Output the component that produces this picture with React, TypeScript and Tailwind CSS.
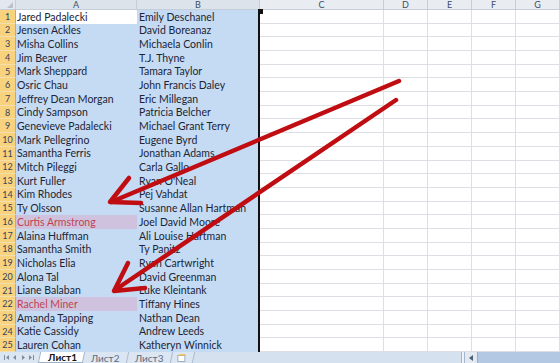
import React from 'react';

const colA = [
  'Jared Padalecki', 'Jensen Ackles', 'Misha Collins', 'Jim Beaver', 'Mark Sheppard',
  'Osric Chau', 'Jeffrey Dean Morgan', 'Cindy Sampson', 'Genevieve Padalecki', 'Mark Pellegrino',
  'Samantha Ferris', 'Mitch Pileggi', 'Kurt Fuller', 'Kim Rhodes', 'Ty Olsson',
  'Curtis Armstrong', 'Alaina Huffman', 'Samantha Smith', 'Nicholas Elia', 'Alona Tal',
  'Liane Balaban', 'Rachel Miner', 'Amanda Tapping', 'Katie Cassidy', 'Lauren Cohan',
];

const colB = [
  'Emily Deschanel', 'David Boreanaz', 'Michaela Conlin', 'T.J. Thyne', 'Tamara Taylor',
  'John Francis Daley', 'Eric Millegan', 'Patricia Belcher', 'Michael Grant Terry', 'Eugene Byrd',
  'Jonathan Adams', 'Carla Gallo', "Ryan O'Neal", 'Pej Vahdat', 'Susanne Allan Hartman',
  'Joel David Moore', 'Ali Louise Hartman', 'Ty Panitz', 'Ryan Cartwright', 'David Greenman',
  'Luke Kleintank', 'Tiffany Hines', 'Nathan Dean', 'Andrew Leeds', 'Katheryn Winnick',
];

// rows flagged as duplicates (purple fill, red text)
const dupes = new Set([15, 21]);

const font = { fontFamily: 'Lato, "Liberation Sans", sans-serif' };

function HeaderRow() {
  const cell = 'flex items-start justify-center border-r border-b border-[#c5cdd8] text-[9px] leading-[9px] text-[#3c4f68]';
  return (
    <div className="grid h-[10px] grid-cols-[16px_121px_123px_124px_44px_44px_44px_44px] overflow-hidden">
      <div className="relative border-r border-b border-[#c5cdd8] bg-[#e3e8ee]">
        <div className="absolute right-[2px] bottom-[1px] h-0 w-0 border-b-[6px] border-l-[6px] border-b-[#b9c1cb] border-l-transparent" />
      </div>
      <div className={`${cell} bg-[#dde3ea]`}>A</div>
      <div className={`${cell} bg-[#dde3ea]`}>B</div>
      <div className={`${cell} bg-[#e9edf2]`}>C</div>
      <div className={`${cell} bg-[#e9edf2]`}>D</div>
      <div className={`${cell} bg-[#e9edf2]`}>E</div>
      <div className={`${cell} bg-[#e9edf2]`}>F</div>
      <div className={`${cell} bg-[#e9edf2]`}>G</div>
    </div>
  );
}

function Row({ i }: { i: number }) {
  const dupe = dupes.has(i);
  const active = i === 0;
  const empty = 'border-r border-b border-[#dcdfe3] bg-white';
  return (
    <div className="grid h-[13.75px] grid-cols-[16px_121px_123px_124px_44px_44px_44px_44px] text-[10.5px] leading-none">
      <div className="flex items-center justify-center border-r border-b border-r-[#d7a94c] border-b-[#f3dfad] bg-[#f8d27c] text-[9px] text-[#34445c]">
        {i + 1}
      </div>
      <div
        className={`flex items-center overflow-hidden whitespace-nowrap pl-[1px] ${
          active ? 'bg-white text-[#1b2230]' : dupe ? 'bg-[#cfc2df] text-[#c2434f]' : 'bg-[#c5dbf4] text-[#1c2536]'
        }`}
      >
        {colA[i]}
      </div>
      <div className="flex items-center overflow-hidden whitespace-nowrap border-r-2 border-[#111] bg-[#c5dbf4] pl-[2px] text-[#1c2536]">
        {colB[i]}
      </div>
      <div className={empty} />
      <div className={empty} />
      <div className={empty} />
      <div className={empty} />
      <div className={empty} />
    </div>
  );
}

function NavGlyphs() {
  return (
    <svg width="38" height="9" viewBox="0 0 38 9" className="shrink-0">
      <g fill="#7d8ba0">
        <rect x="3" y="2" width="1" height="5" />
        <path d="M8 2 L5 4.5 L8 7 Z" />
        <path d="M15 2 L12 4.5 L15 7 Z" />
        <path d="M21 2 L24 4.5 L21 7 Z" />
        <path d="M28 2 L31 4.5 L28 7 Z" />
        <rect x="32" y="2" width="1" height="5" />
      </g>
    </svg>
  );
}

function TabBar() {
  return (
    <div className="flex flex-1 items-stretch bg-[#dce6f2] text-[10px] leading-none">
      <div className="flex items-center pl-[1px]">
        <NavGlyphs />
      </div>
      <div className="flex items-stretch">
        <div className="flex items-center border-x border-b border-[#9fb2ca] bg-white pl-[8px] pr-[6px] font-bold text-[#111] -skew-x-12">
          <span className="skew-x-12">Лист1</span>
        </div>
        <div className="flex items-center border-r border-[#a9bad0] px-[7px] text-[#5b6c83] -skew-x-12">
          <span className="skew-x-12">Лист2</span>
        </div>
        <div className="flex items-center border-r border-[#a9bad0] px-[7px] text-[#5b6c83] -skew-x-12">
          <span className="skew-x-12">Лист3</span>
        </div>
        <div className="flex items-center border-r border-[#a9bad0] px-[6px] -skew-x-12">
          <svg width="10" height="8" viewBox="0 0 10 8" className="skew-x-12">
            <rect x="1" y="1.5" width="7" height="6" fill="#fff" stroke="#8b9bb0" strokeWidth="0.8" />
            <path d="M1 1.5 L3 0 L9 0 L8 1.5" fill="#f2c75c" />
          </svg>
        </div>
      </div>
      <div className="flex-1 bg-[#d5e1ee]" />
      <div className="w-[4px] border-x border-[#a7b7cb] bg-[#eef2f7]" />
      <div className="flex w-[12px] items-center justify-center bg-[#e2e9f2]">
        <svg width="5" height="6" viewBox="0 0 5 6">
          <path d="M4 0 L0 3 L4 6 Z" fill="#4f5f74" />
        </svg>
      </div>
      <div className="w-[83px] border-l border-[#97aecb] bg-[#b3c9e3]" />
    </div>
  );
}

function Arrows() {
  return (
    <svg className="pointer-events-none absolute inset-0" width="560" height="363" viewBox="0 0 560 363">
      <g stroke="#c00d12" strokeWidth="4.5" strokeLinecap="round" strokeLinejoin="round" fill="none">
        <path d="M399 81 L111 202" />
        <path d="M129 178 L110 202 L141 203" />
        <path d="M396 100 L115 290" />
        <path d="M128 263 L114 291 L145 288" />
      </g>
    </svg>
  );
}

export default function App() {
  return (
    <div className="relative flex h-[363px] w-[560px] flex-col overflow-hidden bg-white" style={font}>
      <HeaderRow />
      {colA.map((_, i) => (
        <Row key={i} i={i} />
      ))}
      <TabBar />
      {/* fill handle at the top right of the selection */}
      <div className="absolute left-[258px] top-[9px] h-[5px] w-[5px] bg-[#111]" />
      <Arrows />
    </div>
  );
}
